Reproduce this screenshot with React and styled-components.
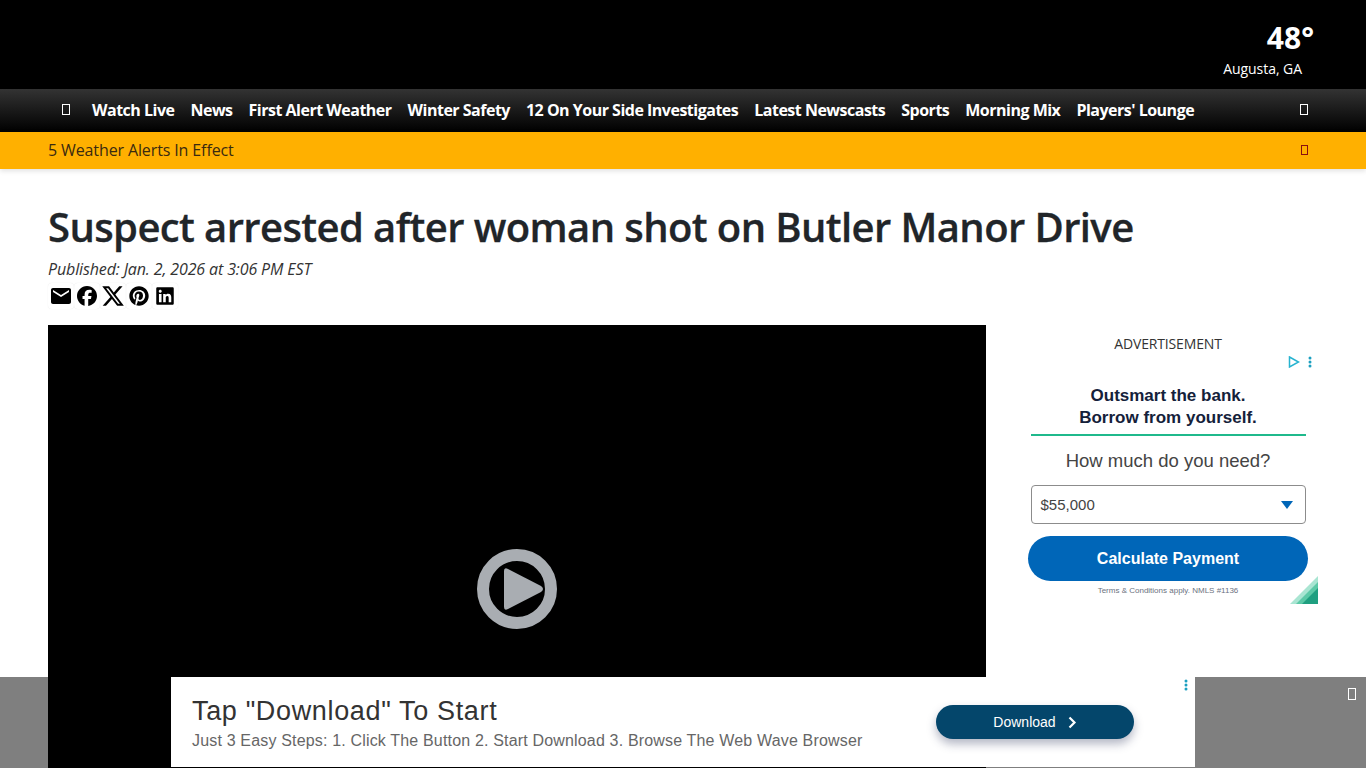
import React from "react";
import styled, { createGlobalStyle } from "styled-components";
import { MdEmail } from "react-icons/md";
import { FaFacebook, FaPinterest, FaLinkedin, FaXTwitter } from "react-icons/fa6";

const Global = createGlobalStyle`
  html, body { margin: 0; padding: 0; height: 100%; overflow: hidden; background: #fff; }
  body { font-family: "Open Sans", "Noto Sans", sans-serif; color: #212529; }
  * { box-sizing: border-box; }
`;

const Page = styled.div`height: 768px; overflow: hidden;`;
const TopBar = styled.header`
  height: 89px; background: #000; display: flex; justify-content: flex-end; padding-right: 52px; color: #fff;
`;
const Weather = styled.div`
  display: flex; flex-direction: column; align-items: flex-end; padding-top: 19px;
`;
const Temp = styled.div`font-size: 30px; line-height: 38px; font-weight: 700;`;
const City = styled.div`font-size: 14px; line-height: 20px; margin-top: 2px; margin-right: 12px; letter-spacing: -.05px;`;
const Nav = styled.nav`
  height: 43px; background: linear-gradient(#333, #000); display: flex; align-items: center; padding: 0 58px 2px 62px;
`;
const NavList = styled.div`display: flex; align-items: center; gap: 16px; flex: 1;`;
const NavLink = styled.a`color: #fff; font-size: 16px; font-weight: 700; white-space: nowrap; letter-spacing: -.5px;`;
const Tofu = styled.span`
  display: inline-block; width: ${p => p.$w || 8}px; height: ${p => p.$h || 11}px;
  border: 1px solid ${p => p.$c || "#fff"}; flex: none; margin-right: ${p => p.$mr || 0}px;
`;
const AlertBar = styled.div`
  height: 37px; background: #ffb000; display: flex; align-items: center; justify-content: space-between;
  padding: 0 58px 2px 48px; box-shadow: 0 2px 5px rgba(0,0,0,.12); position: relative;
`;
const AlertText = styled.div`font-size: 16px; font-weight: 500; color: #3a2a10; letter-spacing: -.12px;`;
const Main = styled.main`padding: 30px 48px 0;`;
const Title = styled.h1`
  margin: 0; font-size: 40px; line-height: 56px; font-weight: 600; color: #212529; white-space: nowrap; letter-spacing: -.6px;
  -webkit-text-stroke: .3px #212529;
`;
const Published = styled.div`font-size: 16px; line-height: 24px; font-style: italic; margin-top: 2px; color: #333; letter-spacing: -.13px;`;
const Share = styled.div`display: flex; gap: 0; margin-top: 2px; margin-bottom: 16px;`;
const ShareBtn = styled.a`
  width: 26px; height: 26px; display: flex; align-items: center; justify-content: center; color: #000;
  border-radius: 4px; box-shadow: 0 0 1px rgba(0,0,0,.12);
`;
const Columns = styled.div`display: flex; gap: 32px;`;
const Video = styled.div`
  width: 938px; height: 527px; background: #000; display: flex; align-items: center; justify-content: center; flex: none;
`;
const Side = styled.aside`width: 300px; flex: none; display: flex; flex-direction: column; align-items: center; padding-top: 10px;`;
const AdLabel = styled.div`font-size: 14px; line-height: 18px; color: #333; text-align: center; letter-spacing: -.15px;`;
const Ad = styled.div`
  width: 300px; height: 250px; margin-top: 1px; position: relative; font-family: "Liberation Sans", Arial, sans-serif;
  display: flex; flex-direction: column; align-items: center;
`;
const AdMark = styled.div`position: absolute; top: 2px; right: 6px; display: flex; gap: 8px; align-items: center;`;
const AdHead = styled.div`
  width: 275px; margin-top: 31px; padding-bottom: 5px; border-bottom: 2px solid #1fb98c; text-align: center;
  font-weight: 700; font-size: 17px; line-height: 22px; color: #14213a;
`;
const AdQ = styled.div`font-size: 18.5px; line-height: 24px; margin-top: 13px; color: #444;`;
const AdSelect = styled.div`
  width: 275px; height: 39px; margin-top: 12px; border: 1px solid #8c8c8c; border-radius: 4px; display: flex;
  align-items: center; justify-content: space-between; padding: 0 12px 0 9px; font-size: 15px; color: #444;
`;
const AdButton = styled.div`
  width: 280px; height: 45px; margin-top: 12px; border-radius: 23px; background: #0066b8; color: #fff;
  font-weight: 700; font-size: 16px; display: flex; align-items: center; justify-content: center;
`;
const AdTerms = styled.div`font-size: 8px; line-height: 10px; margin-top: 5px; color: #6b7280;`;
const Corner = styled.svg`position: absolute; right: 0; bottom: 0;`;
const Backdrop = styled.div`
  position: fixed; left: 0; right: 0; bottom: 0; height: 91px; background: rgba(0,0,0,.5);
  display: flex; justify-content: center; align-items: flex-start;
`;
const Banner = styled.div`
  width: 1024px; height: 90px; background: #fff; position: relative; display: flex; align-items: center;
  justify-content: space-between; padding: 0 61px 0 21px; font-family: "Liberation Sans", Arial, sans-serif;
`;
const BannerText = styled.div`padding-top: 2px;`;
const BannerHead = styled.div`font-size: 27px; line-height: 32px; color: #333; letter-spacing: .65px;`;
const BannerSub = styled.div`font-size: 16px; line-height: 20px; color: #666; margin-top: 4px; letter-spacing: .17px;`;
const BannerBtn = styled.div`
  width: 198px; height: 34px; border-radius: 17px; background: #04466b; color: #fff; font-size: 14px;
  display: flex; align-items: center; justify-content: center; gap: 12px; box-shadow: 0 5px 10px rgba(40,50,90,.35);
`;
const BannerDots = styled.div`position: absolute; top: 2px; right: 7px;`;
const CloseBtn = styled.div`position: absolute; top: 11px; right: 10px; display: flex;`;

const links = ["Watch Live", "News", "First Alert Weather", "Winter Safety", "12 On Your Side Investigates", "Latest Newscasts", "Sports", "Morning Mix", "Players' Lounge"];

const Dots = ({ color }) => (
  <svg width="4" height="12" viewBox="0 0 4 12" fill={color} style={{ display: "block" }}>
    <circle cx="2" cy="2" r="1.5" /><circle cx="2" cy="6" r="1.5" /><circle cx="2" cy="10" r="1.5" />
  </svg>
);

export default function App() {
  return (
    <Page>
      <Global />
      <TopBar>
        <Weather>
          <Temp>48°</Temp>
          <City>Augusta, GA</City>
        </Weather>
      </TopBar>
      <Nav>
        <NavList>
          <Tofu $mr={6} />
          {links.map(l => <NavLink key={l}>{l}</NavLink>)}
        </NavList>
        <Tofu $c="#fff" />
      </Nav>
      <AlertBar>
        <AlertText>5 Weather Alerts In Effect</AlertText>
        <Tofu $w={7} $h={10} $c="#8a1010" />
      </AlertBar>
      <Main>
        <Title>Suspect arrested after woman shot on Butler Manor Drive</Title>
        <Published>Published: Jan. 2, 2026 at 3:06 PM EST</Published>
        <Share>
          <ShareBtn><MdEmail size={24} /></ShareBtn>
          <ShareBtn><FaFacebook size={20} /></ShareBtn>
          <ShareBtn><FaXTwitter size={24} /></ShareBtn>
          <ShareBtn><FaPinterest size={20} /></ShareBtn>
          <ShareBtn><FaLinkedin size={20} /></ShareBtn>
        </Share>
        <Columns>
          <Video>
            <svg width="80" height="80" viewBox="0 0 80 80">
              <circle cx="40" cy="40" r="34" fill="none" stroke="#a9adb2" strokeWidth="12" />
              <path d="M27 22 Q27 18 31 20 L64 37 Q68 40 64 43 L31 60 Q27 62 27 58 Z" fill="#a9adb2" />
            </svg>
          </Video>
          <Side>
            <AdLabel>ADVERTISEMENT</AdLabel>
            <Ad>
              <AdMark>
                <svg width="12" height="12" viewBox="0 0 12 12" fill="none" stroke="#27b3d0" strokeWidth="1.5">
                  <path d="M1.5 1 L10.5 6 L1.5 11 Z" />
                </svg>
                <Dots color="#1b9fc0" />
              </AdMark>
              <AdHead>Outsmart the bank.<br />Borrow from yourself.</AdHead>
              <AdQ>How much do you need?</AdQ>
              <AdSelect>
                $55,000
                <svg width="12" height="8" viewBox="0 0 12 8"><path d="M0 0 H12 L6 8 Z" fill="#0066b8" /></svg>
              </AdSelect>
              <AdButton>Calculate Payment</AdButton>
              <AdTerms>Terms &amp; Conditions apply. NMLS #1136</AdTerms>
              <Corner width="28" height="28" viewBox="0 0 28 28">
                <path d="M28 0 V28 H0 Z" fill="#a9e5d2" />
                <path d="M28 6 V28 H6 Z" fill="#5cc9a7" />
                <path d="M28 12 V28 H12 Z" fill="#1f9f80" />
              </Corner>
            </Ad>
          </Side>
        </Columns>
      </Main>
      <Backdrop>
        <Banner>
          <BannerText>
            <BannerHead>Tap "Download" To Start</BannerHead>
            <BannerSub>Just 3 Easy Steps: 1. Click The Button 2. Start Download 3. Browse The Web Wave Browser</BannerSub>
          </BannerText>
          <BannerBtn>
            Download
            <svg width="9" height="13" viewBox="0 0 9 13" fill="none" stroke="#fff" strokeWidth="2.2"><path d="M1.5 1.5 L6.5 6.5 L1.5 11.5" /></svg>
          </BannerBtn>
          <BannerDots><Dots color="#1b9fc0" /></BannerDots>
        </Banner>
        <CloseBtn><Tofu $w={8} $h={12} $c="#fff" /></CloseBtn>
      </Backdrop>
    </Page>
  );
}
